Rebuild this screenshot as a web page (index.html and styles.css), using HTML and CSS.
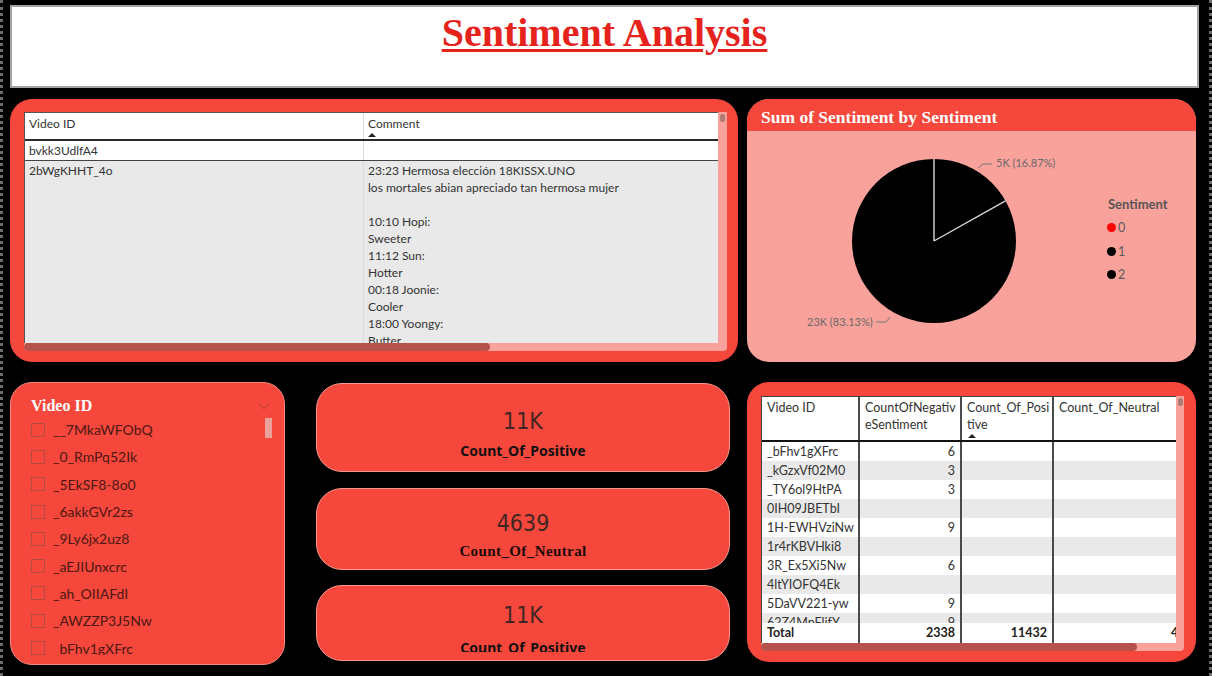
FILE: index.html
```html
<!DOCTYPE html>
<html>
<head>
<meta charset="utf-8">
<link rel="stylesheet" href="styles.css">
</head>
<body>
<div class="page">
  <header class="title-box"><h1 class="title">Sentiment Analysis</h1></header>

  <div class="row row-top">
    <section class="card card-comments">
      <div class="tv">
        <div class="tv-main">
          <div class="ct">
            <div class="ct-row ct-head">
              <div class="ct-cell">Video ID</div>
              <div class="ct-cell ct-sep">Comment<span class="sort-up"></span></div>
            </div>
            <div class="ct-row ct-first">
              <div class="ct-cell">bvkk3UdlfA4</div>
              <div class="ct-cell ct-sep"></div>
            </div>
            <div class="ct-row ct-second">
              <div class="ct-cell">2bWgKHHT_4o</div>
              <div class="ct-cell ct-sep ct-lines">23:23 Hermosa elección 18KISSX.UNO<br>los mortales abian apreciado tan hermosa mujer<br><br>10:10 Hopi:<br>Sweeter<br>11:12 Sun:<br>Hotter<br>00:18 Joonie:<br>Cooler<br>18:00 Yoongy:<br>Butter</div>
            </div>
          </div>
          <div class="vscroll"><span class="vthumb"></span></div>
        </div>
        <div class="hscroll"><span class="hthumb hthumb-1"></span></div>
      </div>
    </section>

    <section class="card card-pie">
      <div class="pie-head">Sum of Sentiment by Sentiment</div>
      <div class="pie-body">
        <svg class="pie-svg" width="360" height="231" viewBox="0 0 360 231">
          <circle cx="187" cy="110" r="82" fill="#000"/>
          <line x1="187" y1="110" x2="187" y2="28" stroke="#d8d8d8" stroke-width="1.4"/>
          <line x1="187" y1="110" x2="258.5" y2="69.9" stroke="#d8d8d8" stroke-width="1.4"/>
          <polyline points="231,37 236,33 245,33" fill="none" stroke="#777" stroke-width="1"/>
          <text x="249" y="36" class="pie-lbl">5K (16.87%)</text>
          <polyline points="129,191 139,191 143,186" fill="none" stroke="#777" stroke-width="1"/>
          <text x="60" y="195" class="pie-lbl">23K (83.13%)</text>
        </svg>
        <div class="legend">
          <div class="legend-title">Sentiment</div>
          <div class="legend-item"><span class="dot dot-red"></span>0</div>
          <div class="legend-item"><span class="dot"></span>1</div>
          <div class="legend-item"><span class="dot"></span>2</div>
        </div>
      </div>
    </section>
  </div>

  <div class="row row-bottom">
    <section class="card slicer">
      <div class="slicer-head">
        <span class="slicer-title">Video ID</span>
        <svg class="chev" width="12" height="8" viewBox="0 0 12 8"><polyline points="1,1 6,6 11,1" fill="none" stroke="#c4463c" stroke-width="1.2"/></svg>
      </div>
      <div class="slicer-body">
        <ul class="slicer-list">
          <li><span class="cb"></span>__7MkaWFObQ</li>
          <li><span class="cb"></span>_0_RmPq52Ik</li>
          <li><span class="cb"></span>_5EkSF8-8o0</li>
          <li><span class="cb"></span>_6akkGVr2zs</li>
          <li><span class="cb"></span>_9Ly6jx2uz8</li>
          <li><span class="cb"></span>_aEJIUnxcrc</li>
          <li><span class="cb"></span>_ah_OIIAFdI</li>
          <li><span class="cb"></span>_AWZZP3J5Nw</li>
          <li><span class="cb"></span>_bFhv1gXFrc</li>
        </ul>
        <span class="slicer-thumb"></span>
      </div>
    </section>

    <div class="kpis">
      <section class="kpi kpi-1">
        <div class="kpi-value">11K</div>
        <div class="kpi-label">Count_Of_Positive</div>
      </section>
      <section class="kpi kpi-2">
        <div class="kpi-value">4639</div>
        <div class="kpi-label kpi-label-serif">Count_Of_Neutral</div>
      </section>
      <section class="kpi kpi-3">
        <div class="kpi-value">11K</div>
        <div class="kpi-label">Count_Of_Positive</div>
      </section>
    </div>

    <section class="card card-matrix">
      <div class="tv tv-m">
        <div class="tv-main tv-main-m">
          <div class="mt">
            <div class="mt-row mt-head">
              <div class="mt-cell">Video ID</div>
              <div class="mt-cell">CountOfNegativ<br>eSentiment</div>
              <div class="mt-cell">Count_Of_Posi<br>tive<span class="sort-up sort-block"></span></div>
              <div class="mt-cell">Count_Of_Neutral</div>
            </div>
            <div class="mt-body">
              <div class="mt-row"><div class="mt-cell">_bFhv1gXFrc</div><div class="mt-cell num">6</div><div class="mt-cell"></div><div class="mt-cell"></div></div>
              <div class="mt-row alt"><div class="mt-cell">_kGzxVf02M0</div><div class="mt-cell num">3</div><div class="mt-cell"></div><div class="mt-cell"></div></div>
              <div class="mt-row"><div class="mt-cell">_TY6ol9HtPA</div><div class="mt-cell num">3</div><div class="mt-cell"></div><div class="mt-cell"></div></div>
              <div class="mt-row alt"><div class="mt-cell">0IH09JBETbI</div><div class="mt-cell num"></div><div class="mt-cell"></div><div class="mt-cell"></div></div>
              <div class="mt-row"><div class="mt-cell">1H-EWHVziNw</div><div class="mt-cell num">9</div><div class="mt-cell"></div><div class="mt-cell"></div></div>
              <div class="mt-row alt"><div class="mt-cell">1r4rKBVHki8</div><div class="mt-cell num"></div><div class="mt-cell"></div><div class="mt-cell"></div></div>
              <div class="mt-row"><div class="mt-cell">3R_Ex5Xi5Nw</div><div class="mt-cell num">6</div><div class="mt-cell"></div><div class="mt-cell"></div></div>
              <div class="mt-row alt"><div class="mt-cell">4ltYIOFQ4Ek</div><div class="mt-cell num"></div><div class="mt-cell"></div><div class="mt-cell"></div></div>
              <div class="mt-row"><div class="mt-cell">5DaVV221-yw</div><div class="mt-cell num">9</div><div class="mt-cell"></div><div class="mt-cell"></div></div>
              <div class="mt-row alt"><div class="mt-cell">62Z4MpFlifY</div><div class="mt-cell num">9</div><div class="mt-cell"></div><div class="mt-cell"></div></div>
            </div>
            <div class="mt-row mt-total">
              <div class="mt-cell">Total</div>
              <div class="mt-cell num">2338</div>
              <div class="mt-cell num">11432</div>
              <div class="mt-cell num">4639</div>
            </div>
          </div>
          <div class="vscroll vscroll-m"><span class="vthumb"></span></div>
        </div>
        <div class="hscroll hscroll-m"><span class="hthumb hthumb-2"></span></div>
      </div>
    </section>
  </div>
</div>
</body>
</html>
```

FILE: styles.css
```css
* { box-sizing: border-box; }
html, body { margin: 0; padding: 0; background: #000; }
body { font-family: Lato, "Noto Sans", sans-serif; }

.page {
  width: 1212px;
  height: 676px;
  background: #000;
  border-left: 3px dotted #6c6c6c;
  border-right: 3px dotted #6c6c6c;
  padding: 5px 0 0 7px;
  overflow: hidden;
}

/* Title */
.title-box {
  width: 1189px;
  height: 83px;
  background: #fff;
  border: 2px solid #a3a3a3;
  text-align: center;
}
.title {
  margin: 0;
  padding-top: 4px;
  font-family: "Liberation Serif", "Times New Roman", serif;
  font-weight: bold;
  font-size: 40px;
  line-height: 44px;
  color: #e5231c;
  text-decoration: underline;
  text-decoration-thickness: 3px;
  text-underline-offset: 3px;
}

.row { display: flex; }
.row-top { margin-top: 11px; gap: 9px; height: 263px; }
.row-bottom { margin-top: 20px; height: 284px; align-items: flex-start; }

.card {
  background: #f5473b;
  border-radius: 22px;
}

/* Generic table view */
.tv { display: flex; flex-direction: column; }
.tv-main { display: flex; }
.vscroll {
  width: 9px;
  background: #f9a29b;
  position: relative;
}
.vthumb {
  position: absolute;
  left: 2px;
  top: 2px;
  width: 5px;
  height: 8px;
  border-radius: 3px;
  background: #b07a75;
}
.hscroll {
  height: 8px;
  background: #f9a29b;
  border-radius: 0 0 4px 4px;
  display: flex;
}
.hthumb {
  height: 8px;
  border-radius: 4px;
  background: #b5524c;
}
.hthumb-1 { width: 466px; }
.hthumb-2 { width: 376px; }

/* Top-left comment table */
.card-comments {
  width: 728px;
  height: 263px;
  padding: 13px 11px 0 14px;
}
.card-comments .tv-main { height: 231px; }
.ct {
  width: 694px;
  height: 231px;
  overflow: hidden;
  background: #e9e9e9;
  border-left: 1px solid #555;
  border-top: 1px solid #555;
  font-size: 12px;
  color: #333;
}
.ct-row { display: grid; grid-template-columns: 338px 1fr; }
.ct-cell { padding: 0 5px 0 4px; }
.ct-sep { border-left: 1px solid #dcdcdc; }
.ct-head {
  background: #fff;
  height: 28px;
  border-bottom: 2px solid #2a2a2a;
}
.ct-head .ct-cell { padding-top: 2px; line-height: 17px; }
.sort-up {
  display: block;
  width: 0;
  height: 0;
  margin-top: 1px;
  border-left: 4px solid transparent;
  border-right: 4px solid transparent;
  border-bottom: 4px solid #222;
}
.ct-first {
  background: #fff;
  height: 20px;
  line-height: 19px;
  border-bottom: 1px solid #444;
}
.ct-second { line-height: 17px; }
.ct-second .ct-cell { padding-top: 1px; }

/* Pie card */
.card-pie {
  width: 449px;
  height: 263px;
  background: #f9a29b;
  overflow: hidden;
}
.pie-head {
  height: 32px;
  background: #f5473b;
  color: #fff;
  font-family: "Liberation Serif", serif;
  font-weight: bold;
  font-size: 17.5px;
  line-height: 20px;
  padding: 8px 0 0 14px;
}
.pie-body { display: flex; height: 231px; }
.pie-svg { display: block; }
.pie-lbl { font-family: Lato, "Noto Sans", sans-serif; font-size: 11px; fill: #6a6a6a; }
.legend { padding-top: 65px; color: #555; }
.legend-title {
  font-weight: bold;
  font-size: 13px;
  line-height: 16px;
  margin-bottom: 4px;
  padding-left: 1px;
}
.legend-item {
  display: flex;
  align-items: center;
  font-size: 12.5px;
  height: 23.5px;
  color: #5a5a5a;
}
.dot {
  width: 9px;
  height: 9px;
  border-radius: 50%;
  background: #000;
  margin-right: 2px;
}
.dot-red { background: #f00; }

/* Slicer */
.slicer {
  width: 275px;
  height: 283px;
  border: 1px solid #f48a80;
  padding: 14px 12px 0 20px;
}
.slicer-head {
  display: flex;
  justify-content: space-between;
  align-items: center;
  height: 18px;
}
.slicer-title {
  font-family: "Liberation Serif", serif;
  font-weight: bold;
  font-size: 16px;
  color: #fff;
}
.chev { margin-right: 2px; margin-top: 2px; }
.slicer-body {
  display: flex;
  justify-content: space-between;
  height: 240px;
  overflow: hidden;
}
.slicer-list {
  list-style: none;
  margin: 1px 0 0 0;
  padding: 0;
  height: 239px;
  overflow: hidden;
}
.slicer-list li {
  display: flex;
  align-items: center;
  height: 27.3px;
  font-size: 14px;
  color: #4c1813;
}
.cb {
  width: 14px;
  height: 14px;
  border: 1px solid #b44a40;
  margin-right: 8px;
}
.slicer-thumb {
  width: 7px;
  height: 20px;
  margin-top: 3px;
  background: #eba19b;
}

/* KPI cards */
.kpis {
  width: 414px;
  margin-left: 31px;
  display: flex;
  flex-direction: column;
  gap: 16px;
  padding-top: 1px;
}
.kpi {
  background: #f5473b;
  border: 1px solid #f7978d;
  border-radius: 26px;
  text-align: center;
  overflow: hidden;
}
.kpi-1 { height: 89px; padding-top: 22px; }
.kpi-2 { height: 82px; padding-top: 20px; }
.kpi-3 { height: 76px; padding-top: 14px; margin-top: -1px; }
.kpi-value {
  font-family: "DejaVu Sans Condensed", "DejaVu Sans", sans-serif;
  font-size: 23px;
  line-height: 30px;
  color: #3f2623;
}
.kpi-label {
  font-family: "Noto Sans", sans-serif;
  font-weight: bold;
  font-size: 14px;
  line-height: 18px;
  color: #111;
}
.kpi-1 .kpi-label { margin-top: 6px; }
.kpi-2 .kpi-value { line-height: 28px; }
.kpi-2 .kpi-label-serif {
  font-family: "Liberation Serif", "Times New Roman", serif;
  font-size: 15px;
  letter-spacing: 0.4px;
  color: #1a0a08;
  margin-top: 5px;
}
.kpi-3 .kpi-label { height: 13px; overflow: hidden; margin-top: 9px; }

/* Matrix card */
.card-matrix {
  width: 449px;
  height: 280px;
  margin-left: 17px;
  padding: 14px 12px 0 14px;
}
.tv-main-m { height: 247px; }
.mt {
  width: 415px;
  height: 247px;
  overflow: hidden;
  background: #fff;
  border-left: 1px solid #444;
  border-top: 1px solid #444;
  font-size: 12.5px;
  color: #333;
}
.mt-row {
  display: grid;
  grid-template-columns: 98px 102px 92px 153px;
  width: 445px;
  height: 19px;
  line-height: 19px;
}
.mt-cell {
  padding: 0 5px;
  border-right: 2px solid #4a4a4a;
  white-space: nowrap;
  overflow: hidden;
}
.mt-cell.num { text-align: right; }
.mt-head {
  height: 45px;
  line-height: 17px;
  border-bottom: 2px solid #111;
}
.mt-head .mt-cell { padding-top: 2px; }
.sort-block { margin-left: 1px; }
.mt-body { height: 181px; overflow: hidden; }
.mt-row.alt { background: #e9e9e9; }
.mt-total {
  font-weight: bold;
  color: #222;
  background: #fff;
  height: 20px;
}
.vscroll-m { height: 247px; width: 8px; }
.hscroll-m { width: 423px; }
```
